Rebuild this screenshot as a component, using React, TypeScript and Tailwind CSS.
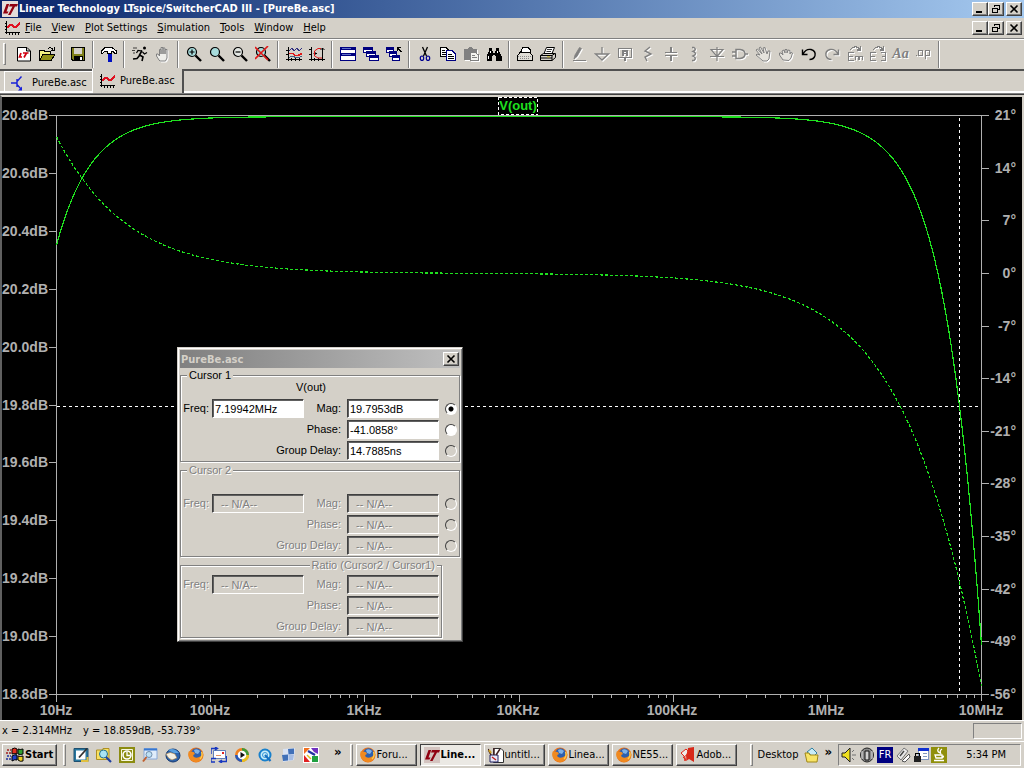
import React, { useId } from "react";

type IconProps = { children: React.ReactNode; off?: boolean; smooth?: boolean };

function Icon({ children, off, smooth }: IconProps) {
  return (
    <svg
      viewBox="0 0 16 16"
      aria-hidden="true"
      shapeRendering={smooth ? "auto" : "crispEdges"}
      className={off ? "h-4 w-4 shrink-0 text-[#808080] drop-shadow-[1px_1px_0_#fff]" : "h-4 w-4 shrink-0 text-black"}
      fill="none"
      stroke="currentColor"
    >
      {children}
    </svg>
  );
}

const RAISED =
  "border border-t-white border-l-white border-b-[#404040] border-r-[#404040] bg-[#d4d0c8] shadow-[inset_-1px_-1px_0_#808080]";

/* ---------- shared drawings ---------- */

const LtLogo = ({ small }: { small?: boolean }) => (
  <Icon smooth>
    <rect x="0" y="0" width="16" height="16" fill={small ? "#d4c4c0" : "#e4dcd8"} stroke="none" />
    <path d="M4.500 3L1 12.500H5.500L6.500 10.500H4.500L7.200 3Z M8 3H16L15 5.500H13L8.500 14H6L10.500 5.500H7Z" fill="#900010" stroke="none" />
  </Icon>
);

const PlotIcon = () => (
  <Icon>
    <path d="M2.500 1V14 M1 12.500H16 M1 3.500H3 M1 6.500H3 M1 9.500H3 M5.500 12V15 M8.500 12V15 M11.500 12V15 M14.500 12V15" />
    <path d="M3 8L6 5H8L10 7H12L16 3" stroke="#e01020" strokeWidth="1.600" />
  </Icon>
);

const Lens = ({ children, fill = "#a8dcdc" }: { children?: React.ReactNode; fill?: string }) => (
  <Icon smooth>
    <circle cx="6" cy="6" r="4.500" fill={fill} strokeWidth="1.200" />
    <path d="M9.500 9.500L15 15" strokeWidth="2.400" />
    {children}
  </Icon>
);

const Firefox = () => (
  <Icon smooth>
    <circle cx="8" cy="8" r="7.500" fill="#e8741c" stroke="none" />
    <circle cx="8.500" cy="6.500" r="5.200" fill="#2c5fae" stroke="none" />
    <path d="M6 3Q9 1 12 4L10 7L7 6Z" fill="#7fb2e6" stroke="none" />
    <path d="M1 4L3 5Q6 4 7 7Q4 8 6 10Q9 12 13 9Q15 7 14 3Q17 9 13 13Q7 18 2 12Q-1 8 1 4Z" fill="#f08a20" stroke="none" />
    <path d="M13.500 5Q15 9 12 12" stroke="#fbd050" strokeWidth="1.300" />
  </Icon>
);

const Cascade = ({ arrow }: { arrow?: boolean }) => (
  <Icon>
    {[[0, 1], [3, 5], [6, 9]].map(([x, y]) => (
      <g key={x}>
        <rect x={x + 0.5} y={y + 0.5} width={arrow ? 7 : 9} height="5" fill="#fff" stroke="#000080" />
        <rect x={x} y={y} width={arrow ? 8 : 10} height="3" fill="#000080" stroke="none" />
      </g>
    ))}
    {arrow && <path d="M15.500 6L11 1.500 M11.500 5V1.500H15" />}
  </Icon>
);

const HAND = "M4 14L1.500 10V8H3L4.500 10V3.500H6V8V1.500H8V8V2H10V8V3.500H12V12L10.500 15H5Z";

/* ---------- toolbar ---------- */

type Tool = { name: string; icon: React.ReactNode; disabled?: boolean };

const groups: Tool[][] = [
  [
    {
      name: "New schematic",
      icon: (
        <Icon smooth>
          <path d="M1.500 1.500H11L14.500 5V15H1.500Z M10.500 1.500V5H14" fill="#fff" />
          <path d="M5 7L3.500 11H6 M7 7H12.500 M10.500 7L8 11.500" stroke="#d00010" strokeWidth="1.700" />
        </Icon>
      ),
    },
    {
      name: "Open",
      icon: (
        <Icon>
          <path d="M.5 14V4.500H5L6 5.500H11.500V8" fill="#f0f080" />
          <path d="M.5 14.500L4 8.500H16L12 14.500Z" fill="#909018" />
          <path d="M9 2.500Q12 .5 14 3.500 M12 4.500H15V1" />
        </Icon>
      ),
    },
  ],
  [
    {
      name: "Save",
      icon: (
        <Icon>
          <path d="M1.500 1.500H14.500V14.500H3L1.500 13Z" fill="#808018" />
          <rect x="4" y="2" width="8" height="6" fill="#d4d0c8" stroke="none" />
          <rect x="4" y="10" width="9" height="5" fill="#000" stroke="none" />
          <rect x="10" y="11" width="2" height="3" fill="#fff" stroke="none" />
        </Icon>
      ),
    },
  ],
  [
    {
      name: "Control panel",
      icon: (
        <Icon>
          <path d="M.5 5L4 1.500H11L15.500 5V7.500H14L12 5.500H10.500V7.500H6.500V5.500H4L2 7H.5Z" fill="#fff" />
          <path d="M8.500 8V16" stroke="#0010c0" strokeWidth="4" />
        </Icon>
      ),
    },
  ],
  [
    {
      name: "Run",
      icon: (
        <Icon smooth>
          <circle cx="12.500" cy="2" r="1.500" fill="#000" stroke="none" />
          <path d="M10 4.500L7.500 9L11 11L10 15 M8 9L5 12.500L1 13" strokeWidth="1.600" />
          <path d="M10 5L6 4.500L4.500 7 M10.500 6L12.500 8L15 6.500" strokeWidth="1.200" />
          <path d="M1 2H5 M0 4.500H3 M1 7H3" strokeWidth=".7" />
        </Icon>
      ),
    },
    { name: "Halt", disabled: true, icon: <Icon off smooth><path d={HAND} fill="#eeeeea" /></Icon> },
  ],
  [
    { name: "Zoom in", icon: <Lens><path d="M6 3.500V8.500 M3.500 6H8.500" strokeWidth="1.200" /></Lens> },
    { name: "Pan", icon: <Lens /> },
    { name: "Zoom out", icon: <Lens fill="#e4e8e4"><path d="M3.500 6H8.500" strokeWidth="1.200" /></Lens> },
    { name: "Zoom to fit", icon: <Lens><path d="M0 1L13 14 M13 0L0 13" stroke="#e01818" strokeWidth="1.600" /></Lens> },
  ],
  [
    {
      name: "Autorange",
      icon: (
        <Icon>
          <path d="M2.500 1V15 M0 13.500H16 M0 4.500H3 M0 8.500H3 M5.500 12V15 M9.500 12V15 M13.500 12V15" />
          <path d="M3 5L6 2L8 5L11 2L13 5L16 2" stroke="#303080" />
          <path d="M3 7.500H7L9 9.500H12L16 7.500" stroke="#e01818" strokeWidth="1.500" />
          <path d="M3 11.500L7 10L10 12L16 10.500" stroke="#406080" />
        </Icon>
      ),
    },
    {
      name: "Plot limits",
      icon: (
        <Icon smooth>
          <path d="M2.500 1V15 M0 13.500H16 M0 3.500H3 M0 8.500H3 M5.500 12V15 M9.500 12V15 M13.500 12V15 M13.500 2V12 M11.500 4L13.500 2L15.500 4 M5 7.500H8 M6.500 6L5 7.500L6.500 9" />
          <path d="M12 2.500H9L5.500 5V10L9 12H13" stroke="#e01818" />
        </Icon>
      ),
    },
  ],
  [
    {
      name: "Tile windows",
      icon: (
        <Icon>
          <path d="M.5 1.500H15.500V14.500H.5Z" fill="#fff" stroke="#000080" />
          <path d="M0 2.500H16 M0 8.500H16" stroke="#000080" strokeWidth="3" />
          <path d="M2 2.500H11 M2 8.500H11" stroke="#6070c8" />
        </Icon>
      ),
    },
    { name: "Cascade windows", icon: <Cascade /> },
    { name: "Close all windows", icon: <Cascade arrow /> },
  ],
  [
    {
      name: "Cut",
      icon: (
        <Icon smooth>
          <path d="M5.500 1L9.500 10 M10.500 1L6.500 10" strokeWidth="1.300" />
          <ellipse cx="5" cy="12.200" rx="1.700" ry="2.200" stroke="#000090" strokeWidth="1.200" />
          <ellipse cx="11" cy="12.200" rx="1.700" ry="2.200" stroke="#000090" strokeWidth="1.200" />
        </Icon>
      ),
    },
    {
      name: "Copy",
      icon: (
        <Icon>
          <path d="M.5 1.500H6L8.500 4V10.500H.5Z" fill="#fff" />
          <path d="M2 4.500H5 M2 6.500H6 M2 8.500H6" />
          <path d="M6.500 4.500H12L15.500 8V14.500H6.500Z" fill="#fff" stroke="#000080" />
          <path d="M8 8.500H12 M8 10.500H14 M8 12.500H14" />
        </Icon>
      ),
    },
    {
      name: "Paste",
      disabled: true,
      icon: (
        <Icon off>
          <path d="M1 2.500H5L6 1H9L10 2.500H14V14H1Z" fill="#808080" stroke="none" />
          <path d="M7.500 6.500H12L15.500 9V14.500H7.500Z" fill="#f4f4f0" />
          <path d="M9 9.500H12 M9 11.500H14" />
        </Icon>
      ),
    },
    {
      name: "Find",
      icon: (
        <Icon>
          <path d="M3 2H6V5H7V7H9V5H10V2H13V5L15.500 10V15H10V10H9V9H7V10H6V15H.5V10L3 5Z" fill="#000" stroke="none" />
          <path d="M4.500 5V7 M11.500 5V7 M2.500 10V13" stroke="#fff" />
        </Icon>
      ),
    },
  ],
  [
    {
      name: "Print setup",
      icon: (
        <Icon>
          <path d="M3.500 7L5.500 1.500H11L13.500 4V7" fill="#fff" />
          <path d="M3 6.500H13L15.500 9.500V14.500H.5V9.500Z" fill="#e0ddd6" />
          <path d="M1 10.500H15 M3 12.500H13" stroke="#888" strokeDasharray="1 1" />
        </Icon>
      ),
    },
    {
      name: "Print",
      icon: (
        <Icon smooth>
          <path d="M4 7.500L6.500 1.500H14.500L12 7.500" fill="#fff" />
          <path d="M7 3.500H12 M6.500 5.500H11" strokeWidth=".8" />
          <path d="M.5 9.500L3.500 7.500H15.500V11.500L12 14.500H.5Z" fill="#d4d0c8" />
          <path d="M.5 9.500H12V14.500 M.5 12H12 M12 9.500L15 7.500" />
          <path d="M7 10.800H10" stroke="#c0b020" />
        </Icon>
      ),
    },
  ],
  [
    { name: "Wire", disabled: true, icon: <Icon off smooth><path d="M3 13L4 9L8.500 1.500L10.500 2.500L6 10.500Z" fill="#808080" strokeWidth=".8" /><path d="M2 14.500H15" /></Icon> },
    { name: "Ground", disabled: true, icon: <Icon off smooth><path d="M8 1V8 M1.500 8H14.500L8 14Z" strokeWidth="1.300" /></Icon> },
    {
      name: "Label net",
      disabled: true,
      icon: <Icon off><path d="M1.500 2.500H14.500V11.500H9L8 14L7 11.500H1.500Z M6 10V5H10V10 M6 7.500H10" strokeWidth="1.400" /></Icon>,
    },
    { name: "Resistor", disabled: true, icon: <Icon off smooth><path d="M10 1L5 5L11 8L5 11L7 15" strokeWidth="1.400" /></Icon> },
    { name: "Capacitor", disabled: true, icon: <Icon off><path d="M8 1V6 M8 10V15 M2 6.500H14 M2 9.500H14" strokeWidth="1.600" /></Icon> },
    { name: "Inductor", disabled: true, icon: <Icon off smooth><path d="M6 1.500H8Q11 3.500 7 5.500Q12 7.500 7 10Q11 12 8 14.500H6" strokeWidth="1.500" /></Icon> },
    { name: "Diode", disabled: true, icon: <Icon off smooth><path d="M8 1V15 M2 3.500H14L8 10.500Z M1 10.500H15" strokeWidth="1.200" /></Icon> },
    { name: "Component", disabled: true, icon: <Icon off smooth><path d="M4 3.500H8Q13 4 13 8Q13 12 8 12.500H4Z M0 6H4 M0 10H4 M13 8H16" strokeWidth="1.500" /></Icon> },
    {
      name: "Move",
      disabled: true,
      icon: <Icon off smooth><path d="M8 15L1 9L2 8L5 9L1 4L2.500 3L7 8L4 2L5.500 1L9 7L8 2L10 1.500L12 8L13 5L15 5L14 13L12 15Z" fill="#e4e2dc" /></Icon>,
    },
    {
      name: "Drag",
      disabled: true,
      icon: <Icon off smooth><path d="M5 14L1.500 9V7H3L5 9L4 5L6 4L7 7V3.500H9V7L10 4L12 4.500V8L13 6L14.500 7L13 12L11 14.500Z" fill="#e4e2dc" /></Icon>,
    },
    { name: "Undo", icon: <Icon smooth><path d="M1.500 3.500V8.500H6.500 M2 8Q5 2.500 10 3.500Q15 5 14 9.500Q13 13.500 8.500 13.500" strokeWidth="1.400" /></Icon> },
    { name: "Redo", disabled: true, icon: <Icon off smooth><path d="M14.500 3.500V8.500H9.500 M14 8Q11 2.500 6 3.500Q1 5 2 9.500Q3 13.500 7.500 13.500" strokeWidth="1.400" /></Icon> },
    {
      name: "Rotate",
      disabled: true,
      icon: <Icon off><path d="M7 6.500H1.500V14.500H7 M1.500 10.500H6 M8.500 14V10.500H15.500V14 M12 10V14 M3 4Q8 -2 13 3 M13.500 0V4H10" strokeWidth="1.200" /></Icon>,
    },
    {
      name: "Mirror",
      disabled: true,
      icon: <Icon off><path d="M6 6.500H.5V14.500H6 M.5 10.500H5 M11 6.500H15.500V14.500H11 M12 10.500H15 M3 4Q8 -2 13 3 M13.500 0V4H10" strokeWidth="1.200" /></Icon>,
    },
    {
      name: "Text",
      disabled: true,
      icon: (
        <span className="font-['Liberation_Serif',serif] text-[14px] leading-4 font-bold text-[#808080] italic [text-shadow:1px_1px_0_#fff]">Aa</span>
      ),
    },
    {
      name: "SPICE directive",
      disabled: true,
      icon: (
        <Icon off>
          <path d="M2.500 4.500H6.500V9.500H2.500Z M9.500 13V4.500H13.500V9.500H10 M0 9.500H1" strokeWidth="1.400" />
        </Icon>
      ),
    },
  ],
];

const Divider = () => (
  <div className="flex w-2 shrink-0 justify-center">
    <div className="h-[27px] w-[2px] border-l border-l-[#808080] bg-white" />
  </div>
);

const Grip = () => <div className="h-[22px] w-[3px] shrink-0 border border-t-white border-l-white border-r-[#808080] border-b-[#808080]" />;

function WindowButtons() {
  const cls = `flex h-[14px] w-4 items-center justify-center ${RAISED}`;
  return (
    <div className="ml-auto flex pr-[2px]">
      <button aria-label="Minimize" className={cls}>
        <svg viewBox="0 0 10 10" className="h-[10px] w-[10px]" shapeRendering="crispEdges"><path d="M1 7H7V9H1Z" /></svg>
      </button>
      <button aria-label="Restore" className={cls}>
        <svg viewBox="0 0 10 10" className="h-[10px] w-[10px]" fill="none" stroke="#000" shapeRendering="crispEdges">
          <path d="M3.500 3V1.500H8.500V5.500H7 M3 1.500H9 M1.500 4.500H6.500V8.500H1.500Z M1 4H7" />
        </svg>
      </button>
      <button aria-label="Close" className={`ml-[2px] ${cls}`}>
        <CloseGlyph />
      </button>
    </div>
  );
}

const CloseGlyph = () => (
  <svg viewBox="0 0 10 10" className="h-[10px] w-[10px]" stroke="#000" strokeWidth="1.600"><path d="M1.500 1.500L8.500 8.500M8.500 1.500L1.500 8.500" /></svg>
);

/* ---------- bode plot ---------- */

const LEFT = 56.5;
const RIGHT = 981.5;
const TOP = 115.5;
const BOTTOM = 694.5;
const xAt = (f: number) => LEFT + ((Math.log10(f) - 1) / 6) * (RIGHT - LEFT);
const yMag = (db: number) => TOP + ((20.8 - db) / 2) * (BOTTOM - TOP);
const yPhase = (deg: number) => TOP + ((21 - deg) / 77) * (BOTTOM - TOP);

const magnitude = (f: number) => {
  const m = f / 1e6;
  return 20.796 - 10 * Math.log10(1 + (3.28 / f) ** 2) - 10 * Math.log10(1 + 0.004755 * m * m + 4.65e-6 * m ** 4);
};
const phase = (f: number) => {
  const m = f / 1e6;
  return ((Math.atan(3.28 / f) - Math.atan(0.0707 * m)) * 180) / Math.PI - 1.957 * m;
};
const trace = (y: (f: number) => number) =>
  Array.from({ length: 464 }, (_, i) => {
    const f = 10 ** (1 + (6 * i) / 463);
    return `${xAt(f).toFixed(2)},${y(f).toFixed(2)}`;
  }).join(" ");

const magTrace = trace((f) => yMag(magnitude(f)));
const phaseTrace = trace((f) => yPhase(phase(f)));
const decades = ["10Hz", "100Hz", "1KHz", "10KHz", "100KHz", "1MHz", "10MHz"];

function BodePlot() {
  return (
    <svg viewBox="2 97 1020 623" className="block w-full bg-black" role="img" aria-label="V(out) magnitude and phase">
      <g stroke="#b0b0b0" fill="none" shapeRendering="crispEdges">
        <path d={`M49 ${TOP}H988 M49 ${BOTTOM}H988 M${LEFT} ${TOP}V701 M${RIGHT} ${TOP}V701`} />
        {Array.from({ length: 11 }, (_, i) => {
          const y = Math.round(TOP + i * 57.9 - 0.5) + 0.5;
          return <path key={i} d={`M49 ${y}H56`} />;
        })}
        {Array.from({ length: 12 }, (_, i) => {
          const y = Math.round(yPhase(21 - 7 * i) - 0.5) + 0.5;
          return <path key={i} d={`M982 ${y}H989`} />;
        })}
        {decades.slice(0, 6).map((_, d) =>
          Array.from({ length: 9 }, (_, k) => {
            const x = Math.floor(xAt((k + 1) * 10 ** (d + 1))) + 0.5;
            return <path key={`${d}-${k}`} d={`M${x} 695V${k === 0 ? 702 : 698}`} />;
          }),
        )}
      </g>
      <g className="fill-[#b0b0b0] font-['Liberation_Sans',Arial,sans-serif] text-[14px] font-bold">
        {Array.from({ length: 11 }, (_, i) => (
          <text key={i} x="48" y={Math.round(120 + i * 57.9)} textAnchor="end">{(20.8 - i * 0.2).toFixed(1)}dB</text>
        ))}
        {Array.from({ length: 12 }, (_, i) => (
          <text key={i} x="1016" y={Math.round(120 + i * 52.64)} textAnchor="end">{21 - 7 * i}°</text>
        ))}
        {decades.map((label, i) => (
          <text key={label} x={Math.round(LEFT + i * 154.17) - 1} y="715" textAnchor="middle">{label}</text>
        ))}
      </g>
      <g fill="none" stroke="#fff" shapeRendering="crispEdges" strokeDasharray="3 3">
        <path d="M959.500 118V694" />
        <path d="M57 406.500H981" />
      </g>
      <g fill="none" stroke="#1fe01f" strokeWidth="1.200">
        <polyline points={magTrace} shapeRendering="crispEdges" />
        <polyline points={phaseTrace} strokeDasharray="3 2" shapeRendering="crispEdges" />
      </g>
      <rect x="498.500" y="97.500" width="39" height="17" fill="#000" stroke="#fff" strokeDasharray="3 2" shapeRendering="crispEdges" />
      <text x="518" y="110" textAnchor="middle" className="fill-[#1fe01f] font-['Liberation_Sans',Arial,sans-serif] text-[13px] font-bold">V(out)</text>
    </svg>
  );
}

/* ---------- cursor dialog ---------- */

const OFF_TEXT = "text-[#808080] [text-shadow:1px_1px_0_#fff]";

function Field({ label, value, off, width }: { label: string; value: string; off?: boolean; width: string }) {
  const id = useId();
  return (
    <>
      <label htmlFor={id} className={`${width} text-right whitespace-nowrap ${off ? OFF_TEXT : ""}`}>{label}</label>
      <input
        id={id}
        defaultValue={value}
        disabled={off}
        className={`h-[19px] w-[92px] border border-t-[#404040] border-l-[#404040] border-r-white border-b-white shadow-[inset_1px_1px_0_#606060] ${
          off ? `bg-[#d4d0c8] pl-2 ${OFF_TEXT}` : "bg-white pl-[2px]"
        }`}
      />
    </>
  );
}

type CursorGroup = { title: string; heading?: string; freq: string; values: string[]; off?: boolean; radios?: boolean; ratio?: boolean };

function CursorFields({ title, heading, freq, values, off, radios, ratio }: CursorGroup) {
  return (
    <fieldset
      className={`min-w-0 border border-[#808080] pb-px shadow-[1px_1px_0_#fff,inset_1px_1px_0_#fff] ${ratio ? "mr-[18px]" : ""}`}
    >
      <legend className={`h-[13px] bg-[#d4d0c8] px-[2px] leading-[13px] ${ratio ? "mr-1 ml-auto" : "ml-[6px]"} ${off ? OFF_TEXT : ""}`}>{title}</legend>
      {!ratio && <div className="mb-[5px] h-3 pr-[18px] text-center leading-[10px]">{heading}</div>}
      <div className={`flex flex-col gap-[2px] ${ratio ? "pt-[3px]" : ""}`}>
        {["Mag:", "Phase:", "Group Delay:"].map((label, i) => (
          <div key={label} className="flex items-center">
            {i === 0 && <Field label="Freq:" value={freq} off={off} width="w-[31px] pr-[3px]" />}
            <Field label={label} value={values[i]} off={off} width={i === 0 ? "w-[43px] pr-[6px]" : "w-[166px] pr-[6px]"} />
            {radios && (
              <input
                type="radio"
                name="attached"
                aria-label={`${title} ${label}`}
                defaultChecked={!off && i === 0}
                className={`ml-[6px] h-3 w-3 appearance-none rounded-full border border-t-[#404040] border-l-[#404040] border-r-white border-b-white checked:bg-[radial-gradient(circle,#000_2px,#fff_3px)] ${
                  off || i === 2 ? "bg-[#d4d0c8]" : "bg-white"
                }`}
              />
            )}
          </div>
        ))}
      </div>
    </fieldset>
  );
}

function CursorDialog() {
  const na = ["-- N/A--", "-- N/A--", "-- N/A--"];
  return (
    <section
      aria-label="PureBe.asc"
      className="absolute top-[250px] left-[175px] w-[286px] border border-t-[#d4d0c8] border-l-[#d4d0c8] border-r-[#404040] border-b-[#404040] bg-[#d4d0c8] p-[2px] pb-[3px] font-['Liberation_Sans',Arial,sans-serif] text-[11px] leading-[13px] shadow-[inset_1px_1px_0_#fff,inset_-1px_-1px_0_#808080]"
    >
      <header className="mb-px flex h-[18px] items-center bg-linear-to-r from-[#808080] to-[#c0c0c0] px-px">
        <h2 className="font-['DejaVu_Sans_Condensed','DejaVu_Sans',sans-serif] font-bold text-[#d4d0c8]">PureBe.asc</h2>
        <button aria-label="Close cursors" className={`ml-auto flex h-[14px] w-4 items-center justify-center ${RAISED}`}>
          <CloseGlyph />
        </button>
      </header>
      <div className="flex flex-col gap-[2px]">
        <CursorFields title="Cursor 1" heading="V(out)" freq="7.19942MHz" values={["19.7953dB", "-41.0858°", "14.7885ns"]} radios />
        <CursorFields title="Cursor 2" freq="-- N/A--" values={na} off radios />
        <CursorFields title="Ratio (Cursor2 / Cursor1)" freq="-- N/A--" values={na} off ratio />
      </div>
    </section>
  );
}

/* ---------- task bar ---------- */

const quickLaunch: { name: string; icon: React.ReactNode }[] = [
  {
    name: "Show desktop",
    icon: <Icon smooth><path d="M1 1.500H15V14.500H1Z" fill="#2878a0" stroke="#205070" /><path d="M3 3.500H12.500V12.500H3Z" fill="#fff" stroke="none" /><path d="M6 10.500L14 1.500" stroke="#303030" strokeWidth="1.800" /><path d="M8 14H14.500V10" stroke="#e0c040" strokeWidth="2" /></Icon>,
  },
  {
    name: "Search",
    icon: <Icon smooth><path d="M.5 3H6L7 1.500H13V12.500H.5Z" fill="#f8e060" stroke="#b09020" /><circle cx="7.500" cy="7" r="4" fill="#a8e4f4" stroke="#207090" /><path d="M10 10L15 15" stroke="#2040a0" strokeWidth="2.200" /></Icon>,
  },
  {
    name: "Outlook",
    icon: <Icon smooth><rect x="0" y="0" width="16" height="16" fill="#8c8c10" stroke="none" /><path d="M2.500 2.500H13.500V13.500H2.500Z" stroke="#f8f8e0" /><circle cx="8" cy="8" r="4" stroke="#fff" strokeWidth="1.600" /><path d="M8 5V8.500H11" stroke="#fff" strokeWidth="1.300" /></Icon>,
  },
  {
    name: "Find files",
    icon: <Icon smooth><path d="M2 1.500H15V12H2Z" fill="#e0ecfa" stroke="#88a8d8" /><path d="M2 2.500H15" stroke="#3878d0" strokeWidth="2" /><circle cx="7" cy="7.500" r="3" fill="#bde0f4" stroke="#708cac" /><path d="M4.500 10L1 14.500" stroke="#c06030" strokeWidth="2" /></Icon>,
  },
  {
    name: "Thunderbird",
    icon: <Icon smooth><ellipse cx="8" cy="8.500" rx="7" ry="6.500" fill="#2a62ac" stroke="#183a70" /><path d="M1 7Q5 4 10 7L12 11L7 13Q3 12 1 7Z" fill="#f4f0e4" stroke="#a07840" strokeWidth=".6" /><path d="M3 3Q9 0 14 6L9 6Z" fill="#58a0e0" stroke="none" /></Icon>,
  },
  { name: "Firefox", icon: <Firefox /> },
  {
    name: "Mail",
    icon: <Icon smooth><path d="M2.500 3.500H14.500V11.500H2.500Z" fill="#fff" stroke="#6080b8" /><path d="M0 7V1.500H6 M15.500 9V14.500H9 M4 0L6.500 1.500L4 3 M11 13L8.500 14.500L11 16 M5 11.500H0V15H4" stroke="#1838c0" strokeWidth="1.400" /><path d="M11 5H13V7H11Z" fill="#e02020" stroke="none" /><path d="M5 8.500H10" stroke="#e09060" /></Icon>,
  },
  {
    name: "Media Player",
    icon: <Icon smooth><circle cx="8" cy="8" r="7" fill="#f08020" stroke="none" /><path d="M8 1A7 7 0 0 1 15 8H8Z" fill="#409838" stroke="none" /><path d="M8 15A7 7 0 0 1 1 8H8Z" fill="#2858b8" stroke="none" /><path d="M15 8A7 7 0 0 1 8 15V8Z" fill="#e8c020" stroke="none" /><circle cx="8" cy="8" r="4.300" fill="#fff" stroke="none" /><path d="M6.500 5L11 8L6.500 11Z" fill="#101010" stroke="none" /></Icon>,
  },
  {
    name: "QuickTime",
    icon: <Icon smooth><circle cx="8" cy="8" r="5.500" fill="#c8ecf8" stroke="#1880cc" strokeWidth="2" /><circle cx="8" cy="8" r="2.500" stroke="#3898d8" /><path d="M8 8L13.500 14" stroke="#1870c0" strokeWidth="2.200" /></Icon>,
  },
  {
    name: "Messenger",
    icon: <Icon smooth><path d="M3 2L15 1L14 13L3 15Z" fill="#d8e2f4" stroke="none" /><path d="M8 2L14 1.500V7L8.500 7.500Z M2 8L8 7.500L8 13.500L3 14Z" fill="#4070b8" stroke="none" /><path d="M8.500 8L14 7.500L13 13L8.500 13.500Z" fill="#a4bce4" stroke="none" /></Icon>,
  },
  {
    name: "Picture viewer",
    icon: <Icon smooth><rect width="16" height="16" fill="#fff" stroke="none" /><path d="M1 1H7L1 7Z" fill="#f07020" stroke="none" /><path d="M8 1H15V7L11 5Z" fill="#7030c0" stroke="none" /><path d="M1 8L7 15H1Z" fill="#e02020" stroke="none" /><path d="M9 9H15V15H9Z" fill="#20a040" stroke="none" /><path d="M5 4L12 8" stroke="#2030a0" strokeWidth="2.200" /><path d="M4 8L8 12" stroke="#e0c020" strokeWidth="1.500" /></Icon>,
  },
];

const tasks: { label: string; icon: React.ReactNode; active?: boolean }[] = [
  { label: "Foru...", icon: <Firefox /> },
  { label: "Line...", icon: <LtLogo small />, active: true },
  {
    label: "untitl...",
    icon: <Icon smooth><path d="M5.500 1.500H13L15.500 4V15.500H5.500Z" fill="#fff" stroke="#303030" /><path d="M2 8H10V15H2Z" fill="#e8e8f8" stroke="#202060" /><path d="M3 8L0 2 M6 8V1 M8 8L12 2" stroke="#402020" strokeWidth="1.500" /><path d="M1 3L3 6" stroke="#d0a020" strokeWidth="2" /><path d="M4 10L8 13" stroke="#c02020" strokeWidth="1.400" /></Icon>,
  },
  { label: "Linea...", icon: <Firefox /> },
  { label: "NE55...", icon: <Firefox /> },
  {
    label: "Adob...",
    icon: <Icon smooth><path d="M1 6L6 2L8 4L5 14L4 9Z" fill="#f0ece8" stroke="#e02818" /><path d="M8 1L14 0V15L9 12L6 14Z" fill="#d82818" stroke="none" /><path d="M3 11Q8 8 9 3" stroke="#e02818" /></Icon>,
  },
];

const trayIcons: { name: string; icon: React.ReactNode }[] = [
  { name: "Volume", icon: <Icon smooth><path d="M1 6H4L9 1V15L4 10H1Z" fill="#f0e020" stroke="#202020" /><path d="M11 5L13 3 M11 8H15 M11 11L13 13" stroke="#707070" /></Icon> },
  { name: "Modem", icon: <Icon smooth><ellipse cx="8" cy="8" rx="6.500" ry="7" fill="#888" stroke="#222" /><path d="M6 4H10V13H6Z" fill="#d0d0d0" stroke="#111" /><path d="M3 4V12 M13 4V12" stroke="#ddd" /></Icon> },
  {
    name: "Keyboard language",
    icon: <span className="flex h-4 w-4 items-center justify-center bg-[#000080] text-[11px] text-white">FR</span>,
  },
  { name: "Safely remove hardware", icon: <Icon smooth><path d="M2 9L9 1L13 4L6 13Z" fill="#e8e8e8" stroke="#777" /><path d="M5 9L9 4" stroke="#444" strokeWidth="1.400" /><path d="M7 14L14 7L15 10L10 15Z" fill="#fff" stroke="#555" /></Icon> },
  { name: "Secure network", icon: <Icon><path d="M5.500 1.500H15.500V12.500H5.500Z" fill="#fff" stroke="#8098c0" /><path d="M5 2.500H16" stroke="#1030d0" strokeWidth="3" /><path d="M10 6.500H14 M10 9.500H14" stroke="#8098c0" /><path d="M1 9H8V15H1Z" fill="#202020" stroke="none" /><path d="M2.500 9V6.500H6.500V9" strokeWidth="1.500" /></Icon> },
  { name: "Java", icon: <Icon smooth><rect width="16" height="16" fill="#90900c" stroke="none" /><path d="M8 1Q5 4 9 6M11 2Q8 4 10 7M4 8H11V11H5Z M11 9Q14 9 11 11 M3 13.500H13" stroke="#fff" strokeWidth="1.300" /></Icon> },
];

const Chevrons = () => <button aria-label="More" className="self-start text-[13px] leading-4 font-bold">»</button>;

const WindowsFlag = () => (
  <svg viewBox="0 0 18 16" aria-hidden="true" className="h-4 w-[18px]">
    <path d="M6 2Q9 0 11 2V7Q9 6 6 7Z" fill="#e03020" stroke="#000" />
    <path d="M12 2Q14 3 17 2V7Q14 8 12 7Z" fill="#30a030" stroke="#000" />
    <path d="M6 9Q9 7 11 8V13Q9 12 6 14Z" fill="#2040c8" stroke="#000" />
    <path d="M12 9Q14 10 17 9V14Q14 15 12 13Z" fill="#f0d020" stroke="#000" />
    <path d="M1 3H5M0 6H5" stroke="#a02020" strokeWidth="1.600" strokeDasharray="2 1" />
    <path d="M1 9H5M0 12H5" stroke="#2030a0" strokeWidth="1.600" strokeDasharray="2 1" />
  </svg>
);

export default function App() {
  const menus = ["File", "View", "Plot Settings", "Simulation", "Tools", "Window", "Help"];
  return (
    <div className="flex min-h-screen flex-col bg-[#d4d0c8] font-['DejaVu_Sans_Condensed','DejaVu_Sans',sans-serif] text-[11px] leading-[14px] text-black">
      <header className="flex h-[18px] items-center bg-linear-to-r from-[#0a246a] to-[#a6caf0] pl-[2px]">
        <LtLogo />
        <h1 className="pl-px text-[11px] font-bold whitespace-nowrap text-white">Linear Technology LTspice/SwitcherCAD III - [PureBe.asc]</h1>
        <WindowButtons />
      </header>

      <nav className="flex h-5 items-center pl-1">
        <PlotIcon />
        <div className="flex gap-[10px] pl-[5px]">
          {menus.map((m) => (
            <button key={m} className="whitespace-nowrap">
              <span className="underline">{m[0]}</span>
              {m.slice(1)}
            </button>
          ))}
        </div>
        <WindowButtons />
      </nav>

      <div role="toolbar" aria-label="Main" className="flex h-[31px] items-center border-t border-t-[#808080] pl-[3px] shadow-[inset_0_1px_0_#fff]">
        <Grip />
        <div className="flex items-center pl-[6px]">
          {groups.map((group, g) => (
            <React.Fragment key={g}>
              {group.map((tool) => (
                <button key={tool.name} aria-label={tool.name} disabled={tool.disabled} className="flex h-[22px] w-[23px] items-center justify-center">
                  {tool.icon}
                </button>
              ))}
              <Divider />
            </React.Fragment>
          ))}
        </div>
      </div>

      <div role="tablist" className="flex h-[26px] items-end border-t-2 border-b-2 border-t-[#505050] border-b-[#808080] pl-1 shadow-[inset_0_-2px_0_#fff]">
        <button role="tab" aria-selected="false" className="flex h-[22px] w-[88px] items-center gap-[5px] border-t border-l border-white pl-[6px]">
          <Icon smooth>
            <path d="M0 8H6 M6 4V12 M6 6.500L10.500 1.500 M6 9.500L10 14" stroke="#1820d8" strokeWidth="1.400" />
            <path d="M11 15.500H7L11 11.500Z" fill="#1820d8" stroke="none" />
          </Icon>
          PureBe.asc
        </button>
        <button role="tab" aria-selected="true" className="flex h-6 w-[92px] items-center gap-[5px] border-l border-r-2 border-l-white border-r-[#505050] bg-[#d4d0c8] pb-px pl-[6px]">
          <PlotIcon />
          PureBe.asc
        </button>
      </div>

      <main className="relative flex-1 border-x-2 border-t-2 border-t-[#d4d0c8] border-l-[#606060] border-r-[#d4d0c8] bg-black shadow-[0_-1px_0_#404040]">
        <BodePlot />
        <CursorDialog />
      </main>

      <div role="status" className="flex h-[21px] items-center gap-[11px] border-t border-t-white pl-[2px]">
        <span>x = 2.314MHz</span>
        <span>y = 18.859dB, -53.739°</span>
        <span className="mr-[2px] ml-auto h-4 w-[49px] border border-t-[#808080] border-l-[#808080] border-r-white border-b-white" />
      </div>

      <footer className="flex h-[27px] items-center border-t border-t-white pr-[3px] pl-[2px]">
        <button className={`flex h-[22px] w-[55px] items-center gap-px pl-[3px] font-bold ${RAISED}`}>
          <WindowsFlag />
          Start
        </button>
        <div className="flex flex-1 items-center pl-[6px]">
          <Grip />
          <div className="flex gap-[7px] pr-[15px] pl-[7px]">
            {quickLaunch.map((q) => (
              <button key={q.name} aria-label={q.name}>{q.icon}</button>
            ))}
          </div>
          <Chevrons />
          <div className="flex items-center gap-[3px] pl-[8px]">
            <Grip />
            {tasks.map((t, i) => (
              <button
                key={i}
                className={`flex h-[22px] w-[61px] items-center gap-px overflow-hidden pl-[3px] whitespace-nowrap ${
                  t.active
                    ? "border border-t-[#404040] border-l-[#404040] border-r-white border-b-white bg-[#ebe9e4] font-bold"
                    : RAISED
                }`}
              >
                {t.icon}
                {t.label}
              </button>
            ))}
          </div>
        </div>
        <div className="flex items-center gap-1 pr-[6px]">
          <Grip />
          <span className="pl-px">Desktop</span>
          <button aria-label="Desktop folder" className="pl-[2px]">
            <Icon smooth>
              <path d="M3 5L8 1L13 6L9 10Z" fill="#c8ecf8" stroke="#3080a0" />
              <path d="M1 6H5L6 8H14L13 15H3Z" fill="#f8e468" stroke="#a08818" />
            </Icon>
          </button>
          <Chevrons />
        </div>
        <div className="flex h-[22px] w-[183px] items-center gap-[2px] border border-t-[#808080] border-l-[#808080] border-r-white border-b-white pl-[2px]">
          {trayIcons.map((t) => (
            <button key={t.name} aria-label={t.name}>{t.icon}</button>
          ))}
          <time className="mr-[14px] ml-auto whitespace-nowrap">5:34 PM</time>
        </div>
      </footer>
    </div>
  );
}
